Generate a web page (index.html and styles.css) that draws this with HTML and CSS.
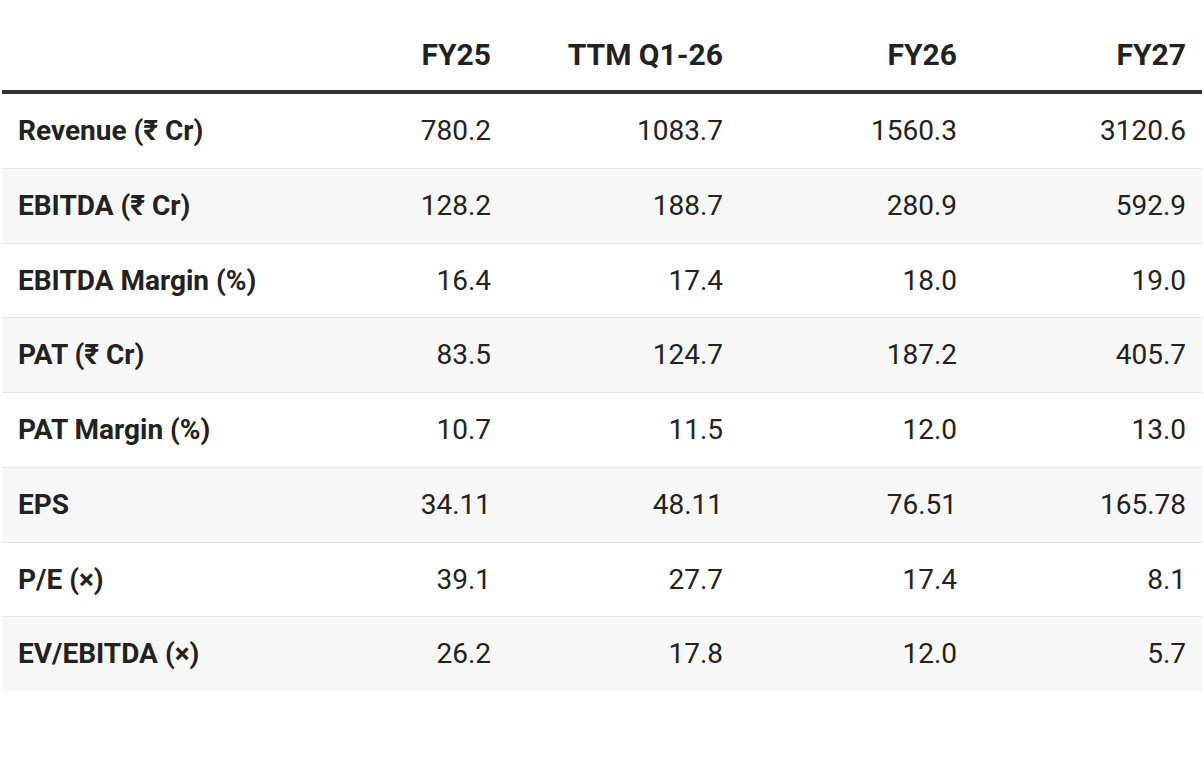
FILE: index.html
```html
<!DOCTYPE html>
<html lang="en">
<head>
<meta charset="utf-8">
<title>Financials</title>
<link rel="stylesheet" href="styles.css">
</head>
<body>
<table class="fin">
  <colgroup>
    <col class="c-label"><col class="c-a"><col class="c-b"><col class="c-c"><col class="c-d">
  </colgroup>
  <thead>
    <tr><th></th><th>FY25</th><th>TTM Q1-26</th><th>FY26</th><th>FY27</th></tr>
  </thead>
  <tbody>
    <tr><td>Revenue (₹ Cr)</td><td>780.2</td><td>1083.7</td><td>1560.3</td><td>3120.6</td></tr>
    <tr><td>EBITDA (₹ Cr)</td><td>128.2</td><td>188.7</td><td>280.9</td><td>592.9</td></tr>
    <tr><td>EBITDA Margin (%)</td><td>16.4</td><td>17.4</td><td>18.0</td><td>19.0</td></tr>
    <tr><td>PAT (₹ Cr)</td><td>83.5</td><td>124.7</td><td>187.2</td><td>405.7</td></tr>
    <tr><td>PAT Margin (%)</td><td>10.7</td><td>11.5</td><td>12.0</td><td>13.0</td></tr>
    <tr><td>EPS</td><td>34.11</td><td>48.11</td><td>76.51</td><td>165.78</td></tr>
    <tr><td>P/E (×)</td><td>39.1</td><td>27.7</td><td>17.4</td><td>8.1</td></tr>
    <tr><td>EV/EBITDA (×)</td><td>26.2</td><td>17.8</td><td>12.0</td><td>5.7</td></tr>
  </tbody>
</table>
</body>
</html>
```
FILE: styles.css
```css
html, body {
  margin: 0;
  padding: 0;
  background: #ffffff;
}
body {
  padding: 0 2px;
  font-family: Roboto, "Liberation Sans", sans-serif;
  color: #222222;
}
.fin {
  width: 1200px;
  border-collapse: collapse;
  table-layout: fixed;
  font-size: 28px;
}
.c-label { width: 305px; }
.c-a { width: 200px; }
.c-b { width: 232px; }
.c-c { width: 234px; }
.c-d { width: 229px; }
.fin th {
  font-size: 30px;
  font-weight: 700;
  text-align: right;
  padding: 36px 16px 16.5px;
  line-height: 37.5px;
  border-bottom: 4px solid #333333;
  vertical-align: bottom;
}
.fin td {
  padding: 18.125px 16px;
  line-height: 37.5px;
  text-align: right;
  border-bottom: 1px solid #e4e4e4;
}
.fin td:first-child {
  text-align: left;
  font-weight: 700;
}
.fin tbody tr:nth-child(even) td {
  background: #f7f7f7;
}
.fin tbody tr:last-child td {
  border-bottom: none;
}
```
